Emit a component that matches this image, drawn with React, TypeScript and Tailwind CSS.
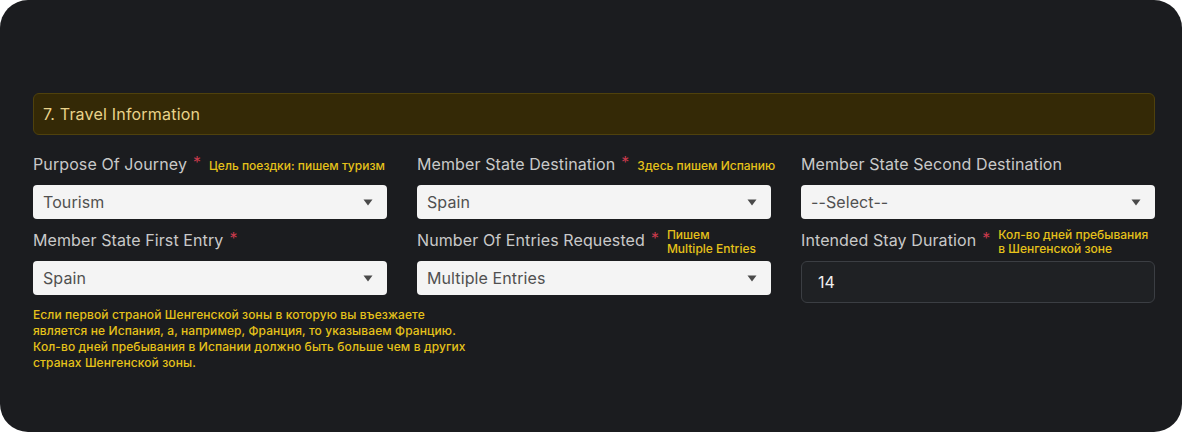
import { ReactNode } from 'react';

const font = { fontFamily: 'Inter, "Noto Sans", sans-serif' };

const Arrow = () => (
  <svg width="10" height="7" viewBox="0 0 10 7" className="shrink-0">
    <path d="M0.5 0.5 H9.5 L5 6.5 Z" fill="#4a4a4a" />
  </svg>
);

const Select = ({ value }: { value: string }) => (
  <div className="flex h-[34px] items-center justify-between rounded-[4px] bg-[#f4f4f4] pl-[10px] pr-[14px] text-[16px] tracking-[0.1px] text-[#505050]">
    <span>{value}</span>
    <Arrow />
  </div>
);

const Label = ({ text, required, note }: { text: string; required?: boolean; note?: ReactNode }) => (
  <div className="flex h-[42px] items-center whitespace-nowrap text-[16px] text-[#c9c9c9]">
    <span className="tracking-[0.1px]">{text}</span>
    {required && <span className="ml-[6px] -mt-[4px] text-[#c83a4c]">*</span>}
    {note && <span className="ml-[8px] mt-[4px] text-[12px] font-medium leading-[14px] text-[#e6c21a]">{note}</span>}
  </div>
);

export default function App() {
  return (
    <div className="h-[432px] w-[1182px] bg-white" style={font}>
      <div className="h-full rounded-[28px] bg-[#1b1c1f] pl-[33px] pr-[27px] pt-[93px]">
        {/* Section header */}
        <div className="flex h-[42px] items-center rounded-[6px] border border-[#4f410c] bg-[#342906] px-[9px] text-[16px] tracking-[0.2px] text-[#e9d38a]">
          7. Travel Information
        </div>

        <div className="mt-[8px] grid grid-cols-3 gap-x-[30px]">
          {/* Column 1 */}
          <div>
            <Label text="Purpose Of Journey" required note="Цель поездки: пишем туризм" />
            <Select value="Tourism" />
            <Label text="Member State First Entry" required />
            <Select value="Spain" />
            <p className="mt-[12px] whitespace-nowrap text-[12px] font-medium leading-[16px] tracking-[0.1px] text-[#e6c21a]">
              Если первой страной Шенгенской зоны в которую вы въезжаете
              <br />
              является не Испания, а, например, Франция, то указываем Францию.
              <br />
              Кол-во дней пребывания в Испании должно быть больше чем в других
              <br />
              странах Шенгенской зоны.
            </p>
          </div>

          {/* Column 2 */}
          <div>
            <Label text="Member State Destination" required note="Здесь пишем Испанию" />
            <Select value="Spain" />
            <Label
              text="Number Of Entries Requested"
              required
              note={
                <>
                  Пишем
                  <br />
                  Multiple Entries
                </>
              }
            />
            <Select value="Multiple Entries" />
          </div>

          {/* Column 3 */}
          <div>
            <Label text="Member State Second Destination" />
            <Select value="--Select--" />
            <Label
              text="Intended Stay Duration"
              required
              note={
                <>
                  Кол-во дней пребывания
                  <br />в Шенгенской зоне
                </>
              }
            />
            <div className="flex h-[42px] items-center rounded-[6px] border border-[#3b3e43] bg-[#1f2124] px-[16px] text-[16px] text-[#f0f0f0]">
              14
            </div>
          </div>
        </div>
      </div>
    </div>
  );
}
